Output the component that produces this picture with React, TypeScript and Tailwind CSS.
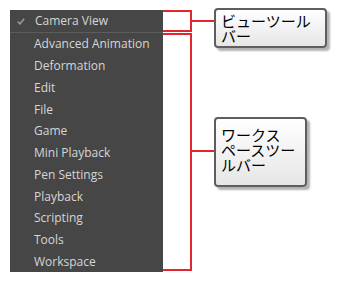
import React from "react";

const items = [
  "Advanced Animation",
  "Deformation",
  "Edit",
  "File",
  "Game",
  "Mini Playback",
  "Pen Settings",
  "Playback",
  "Scripting",
  "Tools",
  "Workspace",
];

function Callout({ className, lines }: { className: string; lines: string[] }) {
  return (
    <div
      className={
        "shrink-0 rounded-[4px] border-2 border-[#5e5e5e] bg-gradient-to-b from-white to-[#e6e6e6] shadow-[3px_3px_2px_rgba(0,0,0,0.3)] pl-[5px] text-[15px] leading-[15px] text-black " +
        className
      }
      style={{ fontFamily: '"Noto Sans CJK JP", sans-serif' }}
    >
      {lines.map((l, i) => (
        <div key={i} className="whitespace-nowrap">
          {l}
        </div>
      ))}
    </div>
  );
}

export default function App() {
  return (
    <div className="w-[341px] h-[283px] bg-white overflow-hidden flex items-start pt-[10px] pl-[10px]">
      <div
        className="w-[153px] h-[262px] shrink-0 bg-[#464646] flex flex-col text-[12px] text-[#d6d6d6]"
        style={{ fontFamily: '"Open Sans", "Noto Sans", sans-serif' }}
      >
        <div className="h-[22px] flex items-center shrink-0">
          <svg width="8" height="7" viewBox="0 0 8 7" className="ml-[7px] mr-[10px]">
            <path d="M0.8 3.6 L3 5.8 L7.2 0.8" stroke="#9a9a9a" strokeWidth="1.6" fill="none" />
          </svg>
          <span>Camera View</span>
        </div>
        <div className="h-px bg-[#5c5c5c] shrink-0" />
        {items.map((t) => (
          <div key={t} className="flex-1 flex items-center pl-[24px] pt-[1px]">
            {t}
          </div>
        ))}
      </div>

      <div className="flex flex-col">
        <div className="h-[22px] flex items-start">
          <div className="w-[29px] h-[22px] shrink-0 border-y-2 border-r-2 border-[#e3262b]" />
          <div className="w-[22px] h-[2px] mt-[10px] shrink-0 bg-[#e3262b]" />
          <Callout className="w-[113px] h-[40px] mt-[-2px] pt-[3px]" lines={["ビューツール", "バー"]} />
        </div>
        <div className="h-px" />
        <div className="flex items-start">
          <div className="w-[29px] h-[238px] shrink-0 border-y-2 border-r-2 border-[#e3262b]" />
          <div className="w-[22px] h-[2px] mt-[117px] shrink-0 bg-[#e3262b]" />
          <Callout
            className="w-[93px] h-[70px] mt-[84px] pt-[8px]"
            lines={["ワークス", "ペースツー", "ルバー"]}
          />
        </div>
      </div>
    </div>
  );
}
